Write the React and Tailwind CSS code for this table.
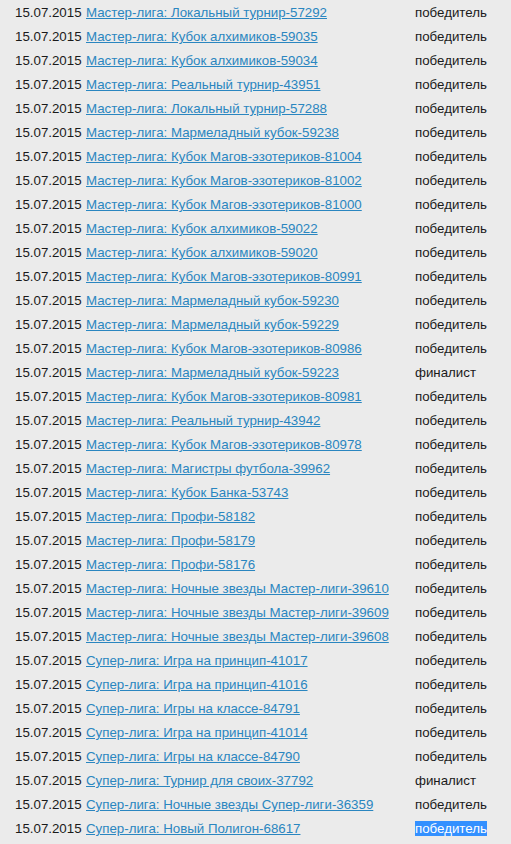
const rows = [
  ['Мастер-лига: Локальный турнир-57292', 'победитель'],
  ['Мастер-лига: Кубок алхимиков-59035', 'победитель'],
  ['Мастер-лига: Кубок алхимиков-59034', 'победитель'],
  ['Мастер-лига: Реальный турнир-43951', 'победитель'],
  ['Мастер-лига: Локальный турнир-57288', 'победитель'],
  ['Мастер-лига: Мармеладный кубок-59238', 'победитель'],
  ['Мастер-лига: Кубок Магов-эзотериков-81004', 'победитель'],
  ['Мастер-лига: Кубок Магов-эзотериков-81002', 'победитель'],
  ['Мастер-лига: Кубок Магов-эзотериков-81000', 'победитель'],
  ['Мастер-лига: Кубок алхимиков-59022', 'победитель'],
  ['Мастер-лига: Кубок алхимиков-59020', 'победитель'],
  ['Мастер-лига: Кубок Магов-эзотериков-80991', 'победитель'],
  ['Мастер-лига: Мармеладный кубок-59230', 'победитель'],
  ['Мастер-лига: Мармеладный кубок-59229', 'победитель'],
  ['Мастер-лига: Кубок Магов-эзотериков-80986', 'победитель'],
  ['Мастер-лига: Мармеладный кубок-59223', 'финалист'],
  ['Мастер-лига: Кубок Магов-эзотериков-80981', 'победитель'],
  ['Мастер-лига: Реальный турнир-43942', 'победитель'],
  ['Мастер-лига: Кубок Магов-эзотериков-80978', 'победитель'],
  ['Мастер-лига: Магистры футбола-39962', 'победитель'],
  ['Мастер-лига: Кубок Банка-53743', 'победитель'],
  ['Мастер-лига: Профи-58182', 'победитель'],
  ['Мастер-лига: Профи-58179', 'победитель'],
  ['Мастер-лига: Профи-58176', 'победитель'],
  ['Мастер-лига: Ночные звезды Мастер-лиги-39610', 'победитель'],
  ['Мастер-лига: Ночные звезды Мастер-лиги-39609', 'победитель'],
  ['Мастер-лига: Ночные звезды Мастер-лиги-39608', 'победитель'],
  ['Супер-лига: Игра на принцип-41017', 'победитель'],
  ['Супер-лига: Игра на принцип-41016', 'победитель'],
  ['Супер-лига: Игры на классе-84791', 'победитель'],
  ['Супер-лига: Игра на принцип-41014', 'победитель'],
  ['Супер-лига: Игры на классе-84790', 'победитель'],
  ['Супер-лига: Турнир для своих-37792', 'финалист'],
  ['Супер-лига: Ночные звезды Супер-лиги-36359', 'победитель'],
  ['Супер-лига: Новый Полигон-68617', 'победитель'],
]

export default function App() {
  return (
    <div className="min-h-screen bg-[#ebebeb] pt-px font-['Liberation_Sans',sans-serif] text-[13.3px] text-[#1a1a1a]">
      {rows.map(([name, result], i) => (
        <div key={i} className="flex h-6 items-center">
          <div className="w-[86px] pl-[15px]">15.07.2015</div>
          <a href="#" className="w-[329px] text-[#2a86c0] underline">
            {name}
          </a>
          <div>
            {i === rows.length - 1 ? (
              <span className="bg-[#3390ff] text-white">{result}</span>
            ) : (
              result
            )}
          </div>
        </div>
      ))}
    </div>
  )
}
